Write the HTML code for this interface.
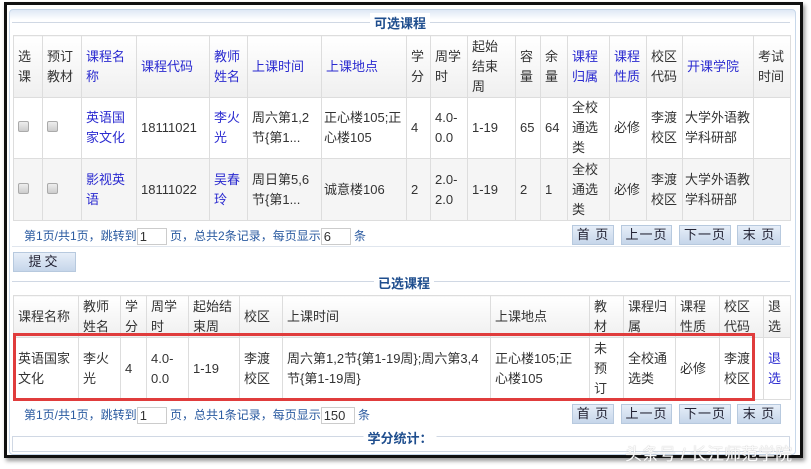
<!DOCTYPE html>
<html><head><meta charset="utf-8"><style>
*{margin:0;padding:0;box-sizing:border-box}
body{width:811px;height:469px;background:#fff;position:relative;overflow:hidden;font-family:"Liberation Sans","Noto Sans CJK SC",sans-serif;font-size:13px;color:#333}
.frame{position:absolute;left:4px;top:2px;width:799px;height:456px;border:3px solid #111;background:#fff;box-shadow:2px 3px 4px #999}
.inner{position:absolute;left:9px;top:9px;width:787px;height:446px;border:1px solid #c8d8ea;border-radius:4px;background:linear-gradient(#dfe9f5,#fff 10px)}
.fs{position:absolute;border-top:1px solid #d0d8e4;left:12px;width:778px}
.leg{position:absolute;background:#fff;color:#1f4e8e;font-weight:bold;font-size:13px;padding:0 4px;transform:translateX(-50%)}
table{position:absolute;border-collapse:collapse;table-layout:fixed;background:#fff}
td{border:1px solid #ddd;padding:0 4px;line-height:20px;vertical-align:middle;word-break:break-all;overflow:hidden}
th{border:1px solid #ddd;padding:0 4px;line-height:20px;font-weight:normal;text-align:left;vertical-align:middle;background:linear-gradient(#fff,#efefef);overflow:hidden}
td.n{padding:0 2px}
.b{color:#2a2ad0}
.alt td{background:#f5f5f5}
.cb{display:inline-block;width:11px;height:11px;border:1px solid #aaa;border-radius:2px;background:linear-gradient(#eee,#ccc)}
.pg{position:absolute;left:24px;color:#2a5aa0;font-size:12px}
.pg span.in{display:inline-block;border:1px solid #ccc;background:#fff;color:#333;height:17px;line-height:16px;padding:0 2px;vertical-align:middle;font-size:13px}
.btn{position:absolute;height:20px;border:1px solid #b7c9de;background:linear-gradient(#e6eef8,#c6d6ea);color:#223;text-align:center;line-height:18px;font-size:13px;letter-spacing:1px}
.wm{position:absolute;left:625px;top:440px;color:#fafafa;font-size:17px;text-shadow:0 0 1px #aaa}
</style></head><body>
<div class="frame"></div>
<div class="inner"></div>

<div class="fs" style="top:22px"></div>
<div class="leg" style="left:400px;top:13px">可选课程</div>
<table style="left:13px;top:35px;width:777px">
<colgroup><col style="width:29px"><col style="width:39px"><col style="width:55px"><col style="width:73px"><col style="width:38px"><col style="width:74px"><col style="width:85px"><col style="width:24px"><col style="width:37px"><col style="width:48px"><col style="width:25px"><col style="width:27px"><col style="width:42px"><col style="width:37px"><col style="width:36px"><col style="width:71px"><col style="width:37px"></colgroup>
<tr style="height:62px"><th>选课</th><th>预订教材</th><th class="b">课程名称</th><th class="b">课程代码</th><th class="b">教师姓名</th><th class="b">上课时间</th><th class="b">上课地点</th><th>学分</th><th>周学时</th><th style="padding-right:14px">起始结束周</th><th>容量</th><th>余量</th><th class="b">课程归属</th><th class="b">课程性质</th><th>校区代码</th><th class="b">开课学院</th><th>考试时间</th></tr>
<tr style="height:61px"><td><span class="cb"></span></td><td><span class="cb"></span></td><td class="b">英语国家文化</td><td>18111021</td><td class="b">李火光</td><td>周六第1,2节{第1...</td><td class="n">正心楼105;正心楼105</td><td>4</td><td>4.0-0.0</td><td>1-19</td><td>65</td><td>64</td><td>全校通选类</td><td>必修</td><td>李渡校区</td><td class="n">大学外语教学科研部</td><td></td></tr>
<tr class="alt" style="height:62px"><td><span class="cb"></span></td><td><span class="cb"></span></td><td class="b">影视英语</td><td>18111022</td><td class="b">吴春玲</td><td>周日第5,6节{第1...</td><td class="n">诚意楼106</td><td>2</td><td>2.0-2.0</td><td>1-19</td><td>2</td><td>1</td><td>全校通选类</td><td>必修</td><td>李渡校区</td><td class="n">大学外语教学科研部</td><td></td></tr>
</table>
<div class="pg" style="top:227px">第1页/共1页，跳转到<span class="in" style="width:30px">1</span> 页，总共2条记录，每页显示<span class="in" style="width:30px">6</span> 条</div>
<div class="btn" style="left:572px;top:225px;width:42px">首 页</div>
<div class="btn" style="left:621px;top:225px;width:51px">上一页</div>
<div class="btn" style="left:679px;top:225px;width:52px">下一页</div>
<div class="btn" style="left:737px;top:225px;width:44px">末 页</div>
<div style="position:absolute;left:12px;top:246px;width:778px;border-top:1px solid #e0e6ee"></div>

<div class="btn" style="left:13px;top:252px;width:63px;letter-spacing:3px">提交</div>

<div class="fs" style="top:281px"></div>
<div class="leg" style="left:404px;top:273px">已选课程</div>
<table style="left:13px;top:295px;width:777px">
<colgroup><col style="width:65px"><col style="width:42px"><col style="width:26px"><col style="width:42px"><col style="width:51px"><col style="width:43px"><col style="width:208px"><col style="width:99px"><col style="width:34px"><col style="width:52px"><col style="width:44px"><col style="width:44px"><col style="width:27px"></colgroup>
<tr style="height:42px"><th>课程名称</th><th>教师姓名</th><th>学分</th><th>周学时</th><th>起始结束周</th><th>校区</th><th>上课时间</th><th>上课地点</th><th>教材</th><th>课程归属</th><th>课程性质</th><th>校区代码</th><th>退选</th></tr>
<tr style="height:62px"><td>英语国家文化</td><td>李火光</td><td>4</td><td>4.0-0.0</td><td>1-19</td><td>李渡校区</td><td>周六第1,2节{第1-19周};周六第3,4节{第1-19周}</td><td>正心楼105;正心楼105</td><td>未预订</td><td>全校通选类</td><td>必修</td><td>李渡校区</td><td class="b">退选</td></tr>
</table>
<div style="position:absolute;left:13px;top:333px;width:742px;height:68px;border:3px solid #e03c3c"></div>
<div class="pg" style="top:406px">第1页/共1页，跳转到<span class="in" style="width:30px">1</span> 页，总共1条记录，每页显示<span class="in" style="width:34px">150</span> 条</div>
<div class="btn" style="left:572px;top:404px;width:42px">首 页</div>
<div class="btn" style="left:621px;top:404px;width:51px">上一页</div>
<div class="btn" style="left:679px;top:404px;width:52px">下一页</div>
<div class="btn" style="left:737px;top:404px;width:44px">末 页</div>

<div class="fs" style="top:436px;height:16px;border:1px solid #d0d8e4"></div>
<div class="leg" style="left:400px;top:428px">学分统计：</div>
<div class="wm">头条号 / 长江师范学院</div>
</body></html>
